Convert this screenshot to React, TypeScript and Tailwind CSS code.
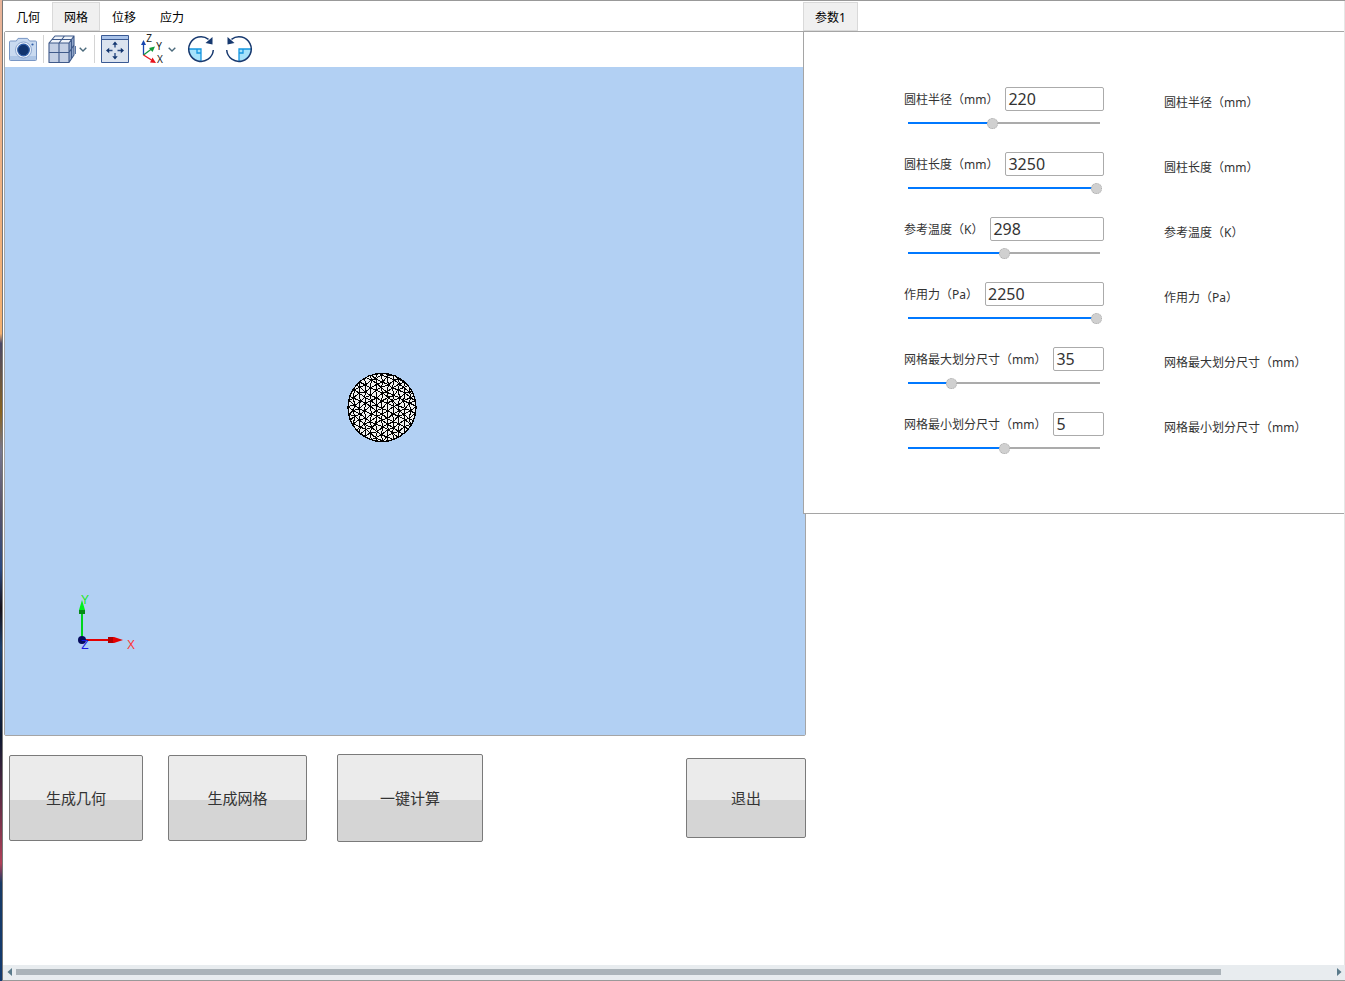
import { useState } from 'react';
import type { ReactNode } from 'react';

type Param = {
  id: string;
  label: string;
  value: number;
  min: number;
  max: number;
};

const TABS = ['几何', '网格', '位移', '应力'];

const PARAMS: Param[] = [
  { id: 'radius', label: '圆柱半径（mm）', value: 220, min: 0, max: 500 },
  { id: 'length', label: '圆柱长度（mm）', value: 3250, min: 0, max: 3250 },
  { id: 'temperature', label: '参考温度（K）', value: 298, min: 273, max: 323 },
  { id: 'force', label: '作用力（Pa）', value: 2250, min: 0, max: 2250 },
  { id: 'maxSize', label: '网格最大划分尺寸（mm）', value: 35, min: 10, max: 126 },
  { id: 'minSize', label: '网格最小划分尺寸（mm）', value: 5, min: 0, max: 10 },
];

// triangular mesh on a slightly disturbed lattice, clipped by the cylinder's end face
function buildMesh(cx: number, cy: number, r: number) {
  const dx = 5.6;
  const dy = 6.6;
  const n = Math.ceil(r / dx) + 1;
  const point = (i: number, j: number) => {
    const jx = Math.sin(i * 12.9 + j * 78.2) * 0.9;
    const jy = Math.cos(i * 39.3 + j * 11.1) * 1.2;
    const shift = i % 2 === 0 ? 0 : dy / 2;
    return `${(cx + i * dx + jx).toFixed(1)} ${(cy + j * dy + shift + jy).toFixed(1)}`;
  };
  let d = '';
  for (let i = -n; i <= n; i++) {
    for (let j = -n; j <= n; j++) {
      const up = i % 2 === 0 ? j - 1 : j;
      d += `M${point(i, j)}L${point(i, j + 1)}`;
      d += `M${point(i, j)}L${point(i + 1, up)}`;
      d += `M${point(i, j)}L${point(i + 1, up + 1)}`;
    }
  }
  return d;
}

const MESH = buildMesh(377, 340.5, 34);

function CameraIcon() {
  return (
    <svg viewBox="0 0 28 28" className="h-7 w-7">
      <path d="M1.5 6h5.8l1.7-2.6h9.5L20.500 6h6q1 0 1 1v17.500q0 1-1 1h-25q-1 0-1-1V7q0-1 1-1z" fill="#c9daf0" stroke="#7896c4" />
      <path d="M1 21h26v3.500q0 .5-.5.5h-25q-.5 0-.5-.5z" fill="#aec6e6" />
      <circle cx="14.500" cy="15" r="8" fill="#eef4fc" stroke="#7896c4" strokeWidth=".8" />
      <circle cx="14.500" cy="15" r="5.800" fill="#12356f" stroke="#2f5ea8" strokeWidth="1.200" />
      <circle cx="23.500" cy="9.500" r="1.100" fill="#2f5ea8" />
    </svg>
  );
}

function CubeIcon() {
  return (
    <svg viewBox="0 0 28 28" className="h-7 w-7" strokeLinejoin="round">
      <path d="M1 8L7 1h19l-5 7z" fill="#f0f4fa" />
      <path d="M1 8h20v19.500H1z" fill="#c3cfe4" />
      <path d="M21 8l5-7v19l-5 7.500z" fill="#93a8cc" />
      <path
        d="M1 8L7 1h19l-5 7zM1 8h20v19.500H1zM21 8l5-7v19l-5 7.500M11 8l5.500-7M11 8v19.500M1 17.500h20l5-7.500M4 4.500h19.500V24"
        fill="none"
        stroke="#3f5a8a"
        strokeWidth="1.100"
      />
      <path d="M27.500 11v8" stroke="#5d77a5" />
    </svg>
  );
}

function FitIcon() {
  return (
    <svg viewBox="0 0 28 28" className="h-7 w-7">
      <path d="M.5.5h27v27H.5z" fill="#dbe3ef" stroke="#3a5a94" />
      <path d="M1 1h26v3H1z" fill="#a9c3ea" />
      <path d="M.5 4.500h27" stroke="#3a5a94" />
      <path d="M14 9v3.500M14 18v3.500M8 15.500h3.500M16.500 15.500H20" stroke="#2c4c84" strokeWidth="1.400" />
      <path d="M14 6.500l2.700 3.200h-5.400zM14 24.500l2.700-3.200h-5.400zM5 15.500l3.200-2.700v5.400zM23 15.500l-3.200-2.700v5.400z" fill="#12356f" />
    </svg>
  );
}

function AxesIcon() {
  return (
    <svg viewBox="0 0 26 28" className="h-7 w-[26px] overflow-visible">
      <path d="M4.500 20V8" stroke="#1746b0" strokeWidth="1.300" />
      <path d="M4.500 5L7 10H2z" fill="#1746b0" />
      <path d="M4.500 20l8-6" stroke="#129a3c" strokeWidth="1.300" />
      <path d="M16 11.500l-2.500 5.500-3.500-4z" fill="#129a3c" />
      <path d="M4.500 20l8 5" stroke="#e8141c" strokeWidth="1.300" />
      <path d="M17 28l-6-.5 2.500-5z" fill="#e8141c" />
      <g fill="#222" fontSize="10" textAnchor="middle">
        <text x="10" y="7">Z</text>
        <text x="20" y="15">Y</text>
        <text x="21" y="28">X</text>
      </g>
    </svg>
  );
}

function RotateIcon({ mirrored = false }: { mirrored?: boolean }) {
  return (
    <svg viewBox="0 0 28 28" className="h-7 w-7">
      <g transform={mirrored ? 'translate(28 0) scale(-1 1)' : undefined}>
        <path d="M14 14v12A12 12 0 0 1 2 14z" fill="#a5e3fb" />
        <path d="M2 14h12v12" fill="none" stroke="#1496e0" strokeWidth="1.300" />
        <path d="M10 14v4h4" fill="none" stroke="#1496e0" strokeWidth="1.300" />
        <path d="M26.300 15A12.300 12.300 0 1 1 21.500 4.300" fill="none" stroke="#17396f" strokeWidth="1.500" />
        <path d="M25.500 2v7.500l-7-1.500z" fill="#17396f" />
      </g>
    </svg>
  );
}

function ChevronButton({ label }: { label: string }) {
  return (
    <button type="button" aria-label={label} className="flex h-7 w-[14px] items-center justify-center">
      <svg viewBox="0 0 8 5" className="h-[5px] w-2">
        <path d="M.7.7L4 4 7.300.7" fill="none" stroke="#4b6a7c" strokeWidth="1.400" />
      </svg>
    </button>
  );
}

function ToolButton({ label, children }: { label: string; children: ReactNode }) {
  return (
    <button type="button" aria-label={label}>
      {children}
    </button>
  );
}

function Toolbar() {
  return (
    <div className="flex h-[35px] items-start bg-white pt-[3px] pl-1">
      <ToolButton label="截图"><CameraIcon /></ToolButton>
      <span className="mr-1 ml-1.5 h-7 w-px bg-[#d4d4d4]" />
      <ToolButton label="显示模式"><CubeIcon /></ToolButton>
      <ChevronButton label="显示模式菜单" />
      <span className="mr-1.5 ml-1 h-7 w-px bg-[#d4d4d4]" />
      <ToolButton label="适应窗口"><FitIcon /></ToolButton>
      <div className="ml-2.5 flex">
        <ToolButton label="视角"><AxesIcon /></ToolButton>
        <ChevronButton label="视角菜单" />
      </div>
      <div className="ml-2 flex gap-2.5">
        <ToolButton label="顺时针旋转"><RotateIcon /></ToolButton>
        <ToolButton label="逆时针旋转"><RotateIcon mirrored /></ToolButton>
      </div>
    </div>
  );
}

function Scene() {
  return (
    <svg viewBox="0 0 800 668" className="block w-full bg-[#b2d0f3]">
      <defs>
        <clipPath id="face">
          <circle cx="377" cy="340.500" r="34" />
        </clipPath>
      </defs>
      <g shapeRendering="crispEdges">
        <circle cx="377" cy="340.500" r="34" fill="#f2f2f0" />
        <path d={MESH} clipPath="url(#face)" fill="none" stroke="#000" />
        <circle cx="377" cy="340.500" r="34" fill="none" stroke="#000" strokeWidth="1.300" />
      </g>

      <path d="M77 573v-30" stroke="#00d51c" strokeWidth="2" />
      <path d="M77 533l3 10v4h-6v-4z" fill="#00f01c" />
      <path d="M74 543h6v4h-6z" fill="#078a16" />
      <path d="M77 573h28" stroke="#e60000" strokeWidth="2" />
      <path d="M118 573l-9 3h-6v-6h6z" fill="#e60000" />
      <path d="M103 570h5v6h-5z" fill="#b00000" />
      <circle cx="77" cy="573" r="4" fill="#050b5c" />
      <g className="font-['Liberation_Sans',sans-serif]" fontSize="12" textAnchor="middle">
        <text x="80" y="537" fill="#1be81b">Y</text>
        <text x="126" y="582" fill="#ff3535">X</text>
        <text x="80" y="582" fill="#1a1ae0">Z</text>
      </g>
    </svg>
  );
}

function ParamRow({ param }: { param: Param }) {
  const [value, setValue] = useState(param.value);
  const percent = ((value - param.min) / (param.max - param.min)) * 100;

  return (
    <div className="grid grid-cols-[200px_1fr] gap-x-[60px]">
      <div>
        <div className="flex h-6 gap-[7px]">
          <label htmlFor={param.id} className="shrink-0 leading-[26px] whitespace-nowrap">
            {param.label}
          </label>
          <input
            id={param.id}
            type="text"
            value={value}
            onChange={e => setValue(Number(e.target.value) || 0)}
            className="h-6 w-0 min-w-0 flex-1 rounded-xs border border-[#ababab] bg-white px-0.5 text-base leading-5 outline-none"
          />
        </div>
        <input
          type="range"
          aria-label={param.label}
          min={param.min}
          max={param.max}
          value={value}
          onChange={e => setValue(Number(e.target.value))}
          className="mx-0.5 mt-1.5 block h-3 w-[196px] appearance-none bg-transparent bg-[length:calc(100%-4px)_2px] bg-center bg-no-repeat outline-none [&::-webkit-slider-thumb]:h-[11px] [&::-webkit-slider-thumb]:w-[11px] [&::-webkit-slider-thumb]:appearance-none [&::-webkit-slider-thumb]:rounded-full [&::-webkit-slider-thumb]:border [&::-webkit-slider-thumb]:border-dotted [&::-webkit-slider-thumb]:border-[#ababab] [&::-webkit-slider-thumb]:bg-[#d0d0d0]"
          style={{
            backgroundImage: `linear-gradient(to right, #0078ff ${percent}%, #ababab ${percent}%)`,
          }}
        />
      </div>
      <span className="leading-8 whitespace-nowrap">{param.label}</span>
    </div>
  );
}

function ActionButton({ size, children }: { size: string; children: ReactNode }) {
  return (
    <button
      type="button"
      className={`rounded-xs border border-[#7a7a7a] bg-[linear-gradient(#ebebeb_52%,#d5d5d5_52%)] text-[15px] text-[#333] ${size}`}
    >
      {children}
    </button>
  );
}

function HorizontalScrollbar() {
  return (
    <div className="mt-auto flex h-[15px] items-start bg-[#e8ecef] pt-[3px]">
      <button type="button" aria-label="向左滚动" className="flex w-[13px] justify-center">
        <svg viewBox="0 0 5 8" className="h-2 w-[5px]">
          <path d="M5 0v8L.5 4z" fill="#5a7a8a" />
        </svg>
      </button>
      <div className="flex h-2 flex-1 items-center">
        <div className="h-1.5 w-[91.5%] bg-[#abb3b9]" />
      </div>
      <button type="button" aria-label="向右滚动" className="flex w-3 justify-center">
        <svg viewBox="0 0 5 8" className="h-2 w-[5px]">
          <path d="M0 0v8l4.500-4z" fill="#5a7a8a" />
        </svg>
      </button>
    </div>
  );
}

export default function App() {
  const [activeTab, setActiveTab] = useState('网格');

  return (
    <div className="flex min-h-screen bg-white font-['Noto_Sans','Noto_Sans_CJK_SC',sans-serif] text-xs text-[#333]">
      {/* sliver of the desktop beside the window */}
      <div className="w-0.5 bg-[linear-gradient(#e8b49a,#f3b070_34%,#4c4a68_35%,#8a6420_42%,#77788f_46%,#5a5468_52%,#2c4a80_58%,#151018_62%,#1c3f6c_66%,#0c1830_75%,#b04058_88%,#173a66_90%,#123a70)]" />

      <div className="flex min-w-0 flex-1 flex-col border-y border-l border-y-[#999] border-l-[#777]">
        <div className="grid flex-1 grid-cols-[802fr_538fr] border-r border-[#e6e6e6] pt-px pl-px">
          <main className="min-w-0">
            <div role="tablist" className="flex h-[29px] text-black">
              {TABS.map(tab => (
                <button
                  key={tab}
                  type="button"
                  role="tab"
                  aria-selected={tab === activeTab}
                  onClick={() => setActiveTab(tab)}
                  className={`w-12 border pt-0.5 text-center ${tab === activeTab ? 'border-[#d9d9d9] bg-[#f0f0f0]' : 'border-transparent'}`}
                >
                  {tab}
                </button>
              ))}
            </div>
            <div className="rounded-xs border border-[#a5a5a5]">
              <Toolbar />
              <Scene />
            </div>
            <div className="flex items-center pt-[18px] pl-[5px]">
              <ActionButton size="h-[86px] w-[134px]">生成几何</ActionButton>
              <div className="ml-[25px] flex">
                <ActionButton size="h-[86px] w-[139px]">生成网格</ActionButton>
              </div>
              <div className="ml-[30px] flex">
                <ActionButton size="h-[88px] w-[146px]">一键计算</ActionButton>
              </div>
              <div className="ml-auto flex">
                <ActionButton size="h-20 w-[120px]">退出</ActionButton>
              </div>
            </div>
          </main>

          {/* the panel laps over the viewer's right edge */}
          <aside className="z-10 -ml-[3px] self-start bg-white">
            <div role="tablist" className="flex h-[29px] text-black">
              <button type="button" role="tab" aria-selected="true" className="border border-[#d9d9d9] bg-[#f0f0f0] px-[11px] pt-0.5">
                参数1
              </button>
            </div>
            <div className="flex flex-col gap-[23px] border border-r-0 border-[#a5a5a5] pt-[55px] pb-[59px] pl-[100px]">
              {PARAMS.map(param => (
                <ParamRow key={param.id} param={param} />
              ))}
            </div>
          </aside>
        </div>

        <HorizontalScrollbar />
      </div>
    </div>
  );
}
